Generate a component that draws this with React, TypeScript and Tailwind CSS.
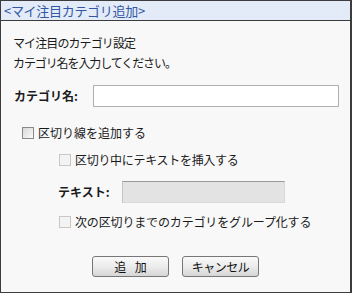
import React from "react";

const font = { fontFamily: '"Noto Sans CJK JP", "Noto Sans", sans-serif' };

function Check({ enabled }: { enabled?: boolean }) {
  return (
    <input
      type="checkbox"
      disabled={!enabled}
      className={
        enabled
          ? "appearance-none w-[12px] h-[12px] border border-[#8a8a8a] bg-gradient-to-br from-[#d8d8d8] to-[#fbfbfb] shrink-0 m-0"
          : "appearance-none w-[12px] h-[12px] border border-[#c8c8c8] bg-[#f3f3f3] shrink-0 m-0"
      }
    />
  );
}

export default function App() {
  return (
    <div
      style={font}
      className="w-[352px] h-[293px] border border-r-2 border-[#3c3c3c] bg-[#f8f8f8] text-[12px] text-[#1a1a1a] box-border"
    >
      <div className="h-[20px] bg-[#e3ebf8] border-b border-[#3c3c3c] pl-[3px] text-[13px] leading-[19px] text-[#3256a3] tracking-[-0.3px]">
        &lt;マイ注目カテゴリ追加&gt;
      </div>
      <div className="pl-[12px] pt-[12px]">
        <p className="h-[20px] leading-[20px] tracking-[-0.9px]">マイ注目のカテゴリ設定</p>
        <p className="h-[20px] leading-[20px] tracking-[-1.1px]">カテゴリ名を入力してください。</p>
        <div className="mt-[12px] flex items-center h-[22px]">
          <label className="w-[80px] pl-[1px] font-bold">カテゴリ名:</label>
          <input className="w-[246px] h-[22px] border border-[#aeaeae] bg-white outline-none" />
        </div>
        <div className="mt-[18px] flex items-center h-[16px] pl-[9px] gap-[4px]">
          <Check enabled />
          <span>区切り線を追加する</span>
        </div>
        <div className="mt-[11px] flex items-center h-[16px] pl-[46px] gap-[4px]">
          <Check />
          <span className="tracking-[-0.3px]">区切り中にテキストを挿入する</span>
        </div>
        <div className="mt-[13px] flex items-center h-[22px] pl-[45px]">
          <label className="w-[64px] font-bold">テキスト:</label>
          <input
            disabled
            className="w-[163px] h-[22px] border border-[#d8d8d8] border-t-[#9a9a9a] border-l-[#c4c4c4] bg-[#e3e3e3] outline-none"
          />
        </div>
        <div className="mt-[11px] flex items-center h-[16px] pl-[46px] gap-[4px]">
          <Check />
          <span className="tracking-[-0.15px]">次の区切りまでのカテゴリをグループ化する</span>
        </div>
        <div className="mt-[26px] flex pl-[79px] gap-[13px]">
          <button className="w-[77px] h-[21px] border border-[#777] rounded-[3px] bg-gradient-to-b from-[#fafafa] via-[#ececec] to-[#d6d6d6] text-[12px] leading-[19px] text-[#111] [word-spacing:6px]">
            追 加
          </button>
          <button className="w-[77px] h-[21px] border border-[#777] rounded-[3px] bg-gradient-to-b from-[#fafafa] via-[#ececec] to-[#d6d6d6] text-[12px] leading-[19px] text-[#111] tracking-[-0.5px]">
            キャンセル
          </button>
        </div>
      </div>
    </div>
  );
}
